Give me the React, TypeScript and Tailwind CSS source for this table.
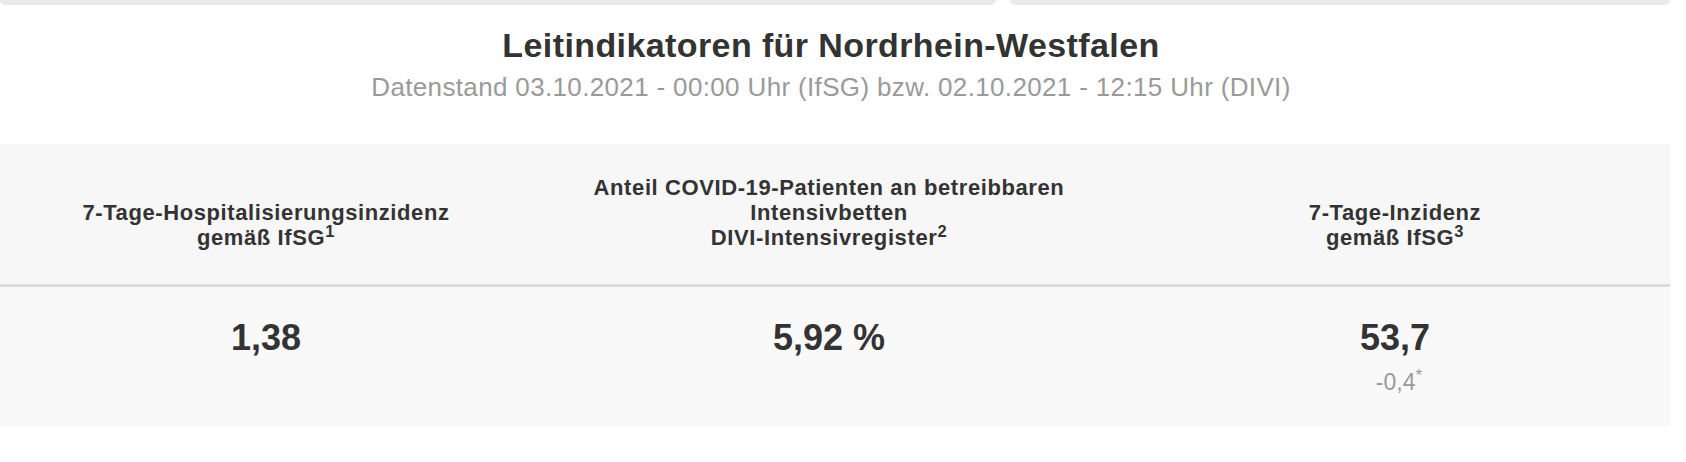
const indicators = [
  {
    label: ['7-Tage-Hospitalisierungsinzidenz', 'gemäß IfSG'],
    note: '1',
    value: '1,38',
  },
  {
    label: ['Anteil COVID-19-Patienten an betreibbaren', 'Intensivbetten', 'DIVI-Intensivregister'],
    note: '2',
    value: '5,92 %',
  },
  {
    label: ['7-Tage-Inzidenz', 'gemäß IfSG'],
    note: '3',
    value: '53,7',
    delta: '-0,4',
  },
];

const App = () => {
  return (
    <div className="w-[1686px] h-[462px] bg-white text-[#333] font-['Liberation_Sans',Arial,sans-serif] overflow-hidden">
      {/* bottoms of the cards above */}
      <div className="flex h-[5px] w-[1670px] gap-[14px]">
        <div className="w-[996px] rounded-b-[6px] bg-[#eaeaea]" />
        <div className="flex-1 rounded-b-[6px] bg-[#eaeaea]" />
      </div>

      <div className="w-[1670px] pr-2 pt-5 text-center">
        <h2 className="text-[34px] leading-[40px] font-bold tracking-[0.4px]">
          Leitindikatoren für Nordrhein-Westfalen
        </h2>
        <p className="mt-2 text-[26px] leading-[28px] text-[#9a9a9a] tracking-[0.35px]">
          Datenstand 03.10.2021 - 00:00 Uhr (IfSG) bzw. 02.10.2021 - 12:15 Uhr (DIVI)
        </p>
      </div>

      <div className="mt-[43px] w-[1670px]">
        <div className="grid h-[143px] grid-cols-[532px_594px_538px_1fr] items-end border-b-[3px] border-[#dcdcdc] bg-[#f7f7f7] pb-[34px]">
          {indicators.map((item, i) => (
            <div key={i} className="text-center text-[22px] leading-[25px] font-bold tracking-[0.6px]">
              {item.label.map((line, j) => (
                <div key={j}>
                  {line}
                  {j === item.label.length - 1 && <sup>{item.note}</sup>}
                </div>
              ))}
            </div>
          ))}
        </div>

        <div className="grid h-[140px] grid-cols-[532px_594px_538px_1fr] items-start bg-[#f9f9f9] pt-[30px]">
          {indicators.map((item, i) => (
            <div key={i} className="flex flex-col items-center">
              <div className="text-[36px] leading-[42px] font-bold">{item.value}</div>
              {item.delta && (
                <div className="mt-[10px] pl-[8px] text-[23px] leading-[26px] text-[#9a9a9a]">
                  {item.delta}
                  <sup>*</sup>
                </div>
              )}
            </div>
          ))}
        </div>
      </div>
    </div>
  );
};

export default App;
